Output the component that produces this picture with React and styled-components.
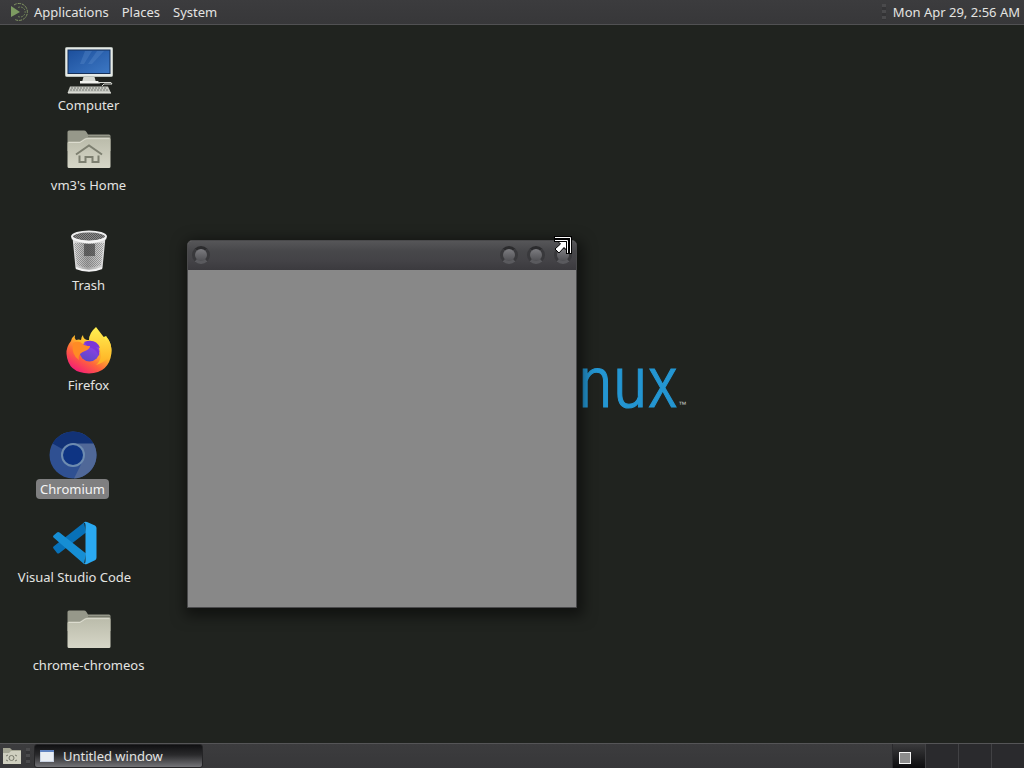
import React from 'react'
import styled, { createGlobalStyle, css } from 'styled-components'

const GlobalStyle = createGlobalStyle`
  * { box-sizing: border-box; }

  body {
    margin: 0;
    background: #20231f;
    font-family: 'Noto Sans', sans-serif;
    font-size: 13px;
    color: #e4e4e2;
  }

  button {
    margin: 0;
    padding: 0;
    border: 0;
    background: none;
    font: inherit;
    color: inherit;
  }
`

const Screen = styled.div`
  display: flex;
  flex-direction: column;
  height: 100vh;
  overflow: hidden;
`

const Panel = styled.header`
  display: flex;
  align-items: stretch;
  flex: none;
  height: 25px;
  background: linear-gradient(#3c3c3e, #373739);
  border-bottom: 1px solid #515153;
`

const BottomPanel = styled(Panel).attrs({ as: 'footer' })`
  border-bottom: 0;
  border-top: 1px solid #555557;
`

const MenuBar = styled.nav`
  display: flex;
  padding-left: 8px;
`

const MenuButton = styled.button`
  display: flex;
  align-items: center;
  gap: 3px;
  padding-right: 13px;
  white-space: nowrap;
`

const Spacer = styled.div`
  flex: 1;
`

const Handle = styled.div`
  flex: none;
  align-self: center;
  width: 4px;
  height: 16px;
  margin: 0 4px;
  background: repeating-linear-gradient(#4a4a4c 0 3px, #343436 3px 6px);
`

const Clock = styled.button`
  padding: 0 4px 0 3px;
  white-space: nowrap;
`

const Desktop = styled.main`
  position: relative;
  flex: 1;
  min-height: 0;
  overflow: hidden;
  background: #20231f;
`

const Launcher = styled.button`
  position: absolute;
  top: ${({ $y }) => $y}px;
  left: ${({ $x }) => $x}px;
  display: flex;
  flex-direction: column;
  align-items: center;
  width: 131px;

  svg { flex: none; display: block; }
`

const Label = styled.span`
  height: 20px;
  padding: 0 4px;
  border-radius: 4px;
  line-height: 20px;
  white-space: nowrap;
  ${({ $selected }) => $selected && css`
    background: #7f7f80;
    color: #f4f4f4;
  `}
`

const Wordmark = styled.div`
  position: absolute;
  top: 318px;
  left: 578px;
  display: flex;
  align-items: baseline;
  font-family: 'Liberation Sans Narrow', 'Roboto Condensed', 'Open Sans', sans-serif;
  font-size: 72px;
  font-weight: 300;
  line-height: 80px;
  color: #2496d2;
  -webkit-text-stroke: 1px #2496d2;

  small {
    font-family: 'Liberation Sans', sans-serif;
    font-size: 8px;
    color: #c8c8c8;
    -webkit-text-stroke: 0;
  }
`

const Window = styled.section`
  position: absolute;
  top: 215px;
  left: 187px;
  display: flex;
  flex-direction: column;
  width: 390px;
  height: 368px;
  border: 1px solid #4a4a4c;
  border-radius: 5px 5px 0 0;
  background: #888888;
  box-shadow: 2px 4px 14px 4px rgba(0, 0, 0, 0.5);
`

const TitleBar = styled.div`
  display: flex;
  align-items: center;
  flex: none;
  gap: 9px;
  height: 29px;
  padding: 0 4px 2px;
  border-radius: 4px 4px 0 0;
  background: linear-gradient(#565658 0, #47474a 35%, #434246 70%, #3b3a3e);
`

const WindowButton = styled.button`
  width: 18px;
  height: 18px;
  border: 3px solid;
  border-color: #2b2b2d #39393c #5a5a5e;
  border-radius: 50%;
  background: linear-gradient(#7c7c80, #505054);
`

const Pointer = styled.svg`
  position: absolute;
  top: 211px;
  left: 554px;
`

const PanelButton = styled.button`
  display: flex;
  align-items: center;
  padding-left: 2px;
`

const Task = styled.button`
  display: flex;
  align-items: center;
  gap: 9px;
  width: 169px;
  padding-left: 5px;
  border: 1px solid #242426;
  border-radius: 3px;
  background: linear-gradient(#101012, #2a2a2c 45%, #737377);
  white-space: nowrap;
`

const Workspaces = styled.div`
  display: flex;
`

const Workspace = styled.button`
  display: flex;
  align-items: center;
  justify-content: center;
  width: 33px;
  padding: 4px 8px 0 0;
  border-left: 1px solid ${({ $active }) => ($active ? '#2a2a2d' : '#414144')};
  background: ${({ $active }) => ($active ? 'linear-gradient(#3a3a3c, #0c0c0e)' : '#2a2a2d')};
`

const MiniWindow = styled.span`
  width: 12px;
  height: 12px;
  border: 1px solid #f4f4f4;
  background: #8c8c8c;
`

const ComputerIcon = () => (
  <svg width="48" height="48" viewBox="0 0 48 48">
    <defs>
      <linearGradient id="screen" x1="0" y1="0" x2="1" y2="1">
        <stop offset="0" stopColor="#1c4f9c" />
        <stop offset="1" stopColor="#3d78c4" />
      </linearGradient>
    </defs>
    <rect x="0.5" y="0.5" width="47" height="29" rx="1" fill="#e6eae6" stroke="#b9c0bb" />
    <rect x="3" y="3" width="42" height="23.5" fill="url(#screen)" stroke="#163058" />
    <path d="M20 4h7l-8 13h-4zM32 4h7L27 17h-4z" fill="#5b8ccc" opacity=".35" />
    <path d="M18.5 30h11l1.5 5H17z" fill="#d5d8d2" />
    <path d="M15 34h18l2 2.5H15z" fill="#f1f2ee" />
    <path d="M33 35.5h13l1 1.500H39l-2 2" fill="none" stroke="#d9dbd5" />
    <path d="M5 39.500h38l3 6.500H2.500z" fill="#c7c9c2" />
    <path d="M6 41h36M5 43h38" stroke="#777b75" strokeDasharray="2 1" />
    <path d="M3 46h43" stroke="#eff0ea" />
  </svg>
)

const FolderIcon = ({ home }) => (
  <svg width="48" height="48" viewBox="0 0 48 48">
    <defs>
      <linearGradient id="folder" x1="0" y1="0" x2="0" y2="1">
        <stop offset="0" stopColor="#babbaa" />
        <stop offset="1" stopColor="#d6d6c7" />
      </linearGradient>
    </defs>
    <path d="M2.500 5q0-1.500 1.500-1.500h15q1.500 0 2.300 1.300L23 7.500h21q1.500 0 1.500 1.500V24h-43z" fill="#96988a" />
    <path d="M23 9.500h22" stroke="#77796c" />
    <path d="M2.500 16q0-1.500 1.500-1.500h11l4.500-3q1-.8 2.500-.8h22q1.500 0 1.500 1.500v27.300q0 1.500-1.500 1.500H4q-1.500 0-1.500-1.500z" fill="url(#folder)" />
    <path d="M3.500 15.500H15l5-3.200q1-.6 2-.6h22.500" fill="none" stroke="#dcdccf" />
    {home && (
      <path
        d="M11 27.500L24 18.500l13 9M14.500 28.500v6.500h6v-5h7v5h6v-6.500"
        fill="none"
        stroke="#7d7f70"
        strokeWidth="2"
      />
    )}
  </svg>
)

const TrashIcon = () => (
  <svg width="48" height="48" viewBox="0 0 48 48">
    <defs>
      <linearGradient id="can" x1="0" y1="0" x2="1" y2="0">
        <stop offset="0" stopColor="#e2e2e2" />
        <stop offset=".45" stopColor="#a4a4a4" />
        <stop offset="1" stopColor="#e4e4e4" />
      </linearGradient>
      <pattern id="mesh" width="2" height="2" patternUnits="userSpaceOnUse">
        <path d="M0 0h1v1H0zM1 1h1v1H1z" fill="#555" />
      </pattern>
    </defs>
    <path d="M7.500 10l3 31q13.500 6.500 27 0l3-31z" fill="url(#can)" />
    <path d="M9 16l3 22q12 5 24 0l3-22z" fill="url(#mesh)" opacity=".45" />
    <path d="M19 17h11v12H19z" fill="#363636" opacity=".6" />
    <path d="M11 41q13 5.500 26 0" fill="none" stroke="#f2f2f2" strokeWidth="2" />
    <ellipse cx="24" cy="9.500" rx="17" ry="5" fill="#5c5c5c" stroke="#eee" strokeWidth="2" />
    <ellipse cx="24" cy="9.500" rx="15" ry="3.500" fill="#8a8a8a" />
    <ellipse cx="24" cy="9.500" rx="15" ry="3.500" fill="url(#mesh)" />
    <path d="M7 11q17 8.500 34 0" fill="none" stroke="#f4f4f4" strokeWidth="2.500" />
  </svg>
)

const FirefoxIcon = () => (
  <svg width="48" height="48" viewBox="0 0 48 48">
    <defs>
      <linearGradient id="fire" x1=".8" y1=".1" x2=".2" y2=".9">
        <stop offset="0" stopColor="#fff044" />
        <stop offset=".35" stopColor="#ffb52b" />
        <stop offset=".65" stopColor="#ff653b" />
        <stop offset="1" stopColor="#f52272" />
      </linearGradient>
      <linearGradient id="globe" x1=".7" y1="0" x2=".3" y2="1">
        <stop offset="0" stopColor="#9a3df0" />
        <stop offset="1" stopColor="#5949c4" />
      </linearGradient>
      <linearGradient id="tail" x1="0" y1="0" x2="0" y2="1">
        <stop offset="0" stopColor="#fff152" />
        <stop offset="1" stopColor="#ffae22" />
      </linearGradient>
    </defs>
    <path d="M10 8q-1 3 1 5 3-1 5 0 0-3 2-5 0 4 4 5h10l9-4q6 7 5.500 17Q44 46 24 46.500 3 46 1.500 27 1 20 6 14q1-4 4-6z" fill="url(#fire)" />
    <path d="M31 0q-7 6-7 13 12 2 12 14 0 7-5 11 15-5 15.500-15-.5-8-4.500-12l-1-2 1 5Q37 8 31 0z" fill="url(#tail)" />
    <circle cx="24.500" cy="24.500" r="10" fill="url(#globe)" />
    <path d="M19 15q12-4 16 6l-4-1q4 4 3 9-3-8-11-9z" fill="#7a35d8" />
    <path d="M8 16q6-3 10 1 2 2 7 2 0 3-5 5-3 1-5 3-2 2-1 6-8-5-6-17z" fill="#ff8b25" />
  </svg>
)

const ChromiumIcon = () => (
  <svg width="48" height="48" viewBox="0 0 48 48">
    <circle cx="24" cy="24" r="23.500" fill="#2f5092" />
    <path d="M24 24L3.500 12.500A23.500 23.500 0 0 1 44.500 12.500z" fill="#123276" />
    <path d="M24 12.500h20.500A23.500 23.500 0 0 1 25 47.500l9-18z" fill="#506898" />
    <circle cx="24" cy="24" r="12" fill="#6e8cb0" />
    <circle cx="24" cy="24" r="10" fill="#0e3483" />
  </svg>
)

const CodeIcon = () => (
  <svg width="48" height="48" viewBox="0 0 48 48">
    <path d="M2.500 29.500q-1-1 0-2L33 3.500l2 10L8.500 34q-1.500 1-2.500 0z" fill="#0871b8" />
    <path d="M2.500 18.500q-1-1 0-2L6 13.500q1-1 2.500 0L35 34.500l-2 10.500z" fill="#168ed4" />
    <path d="M32.500 3.500q1.500-1.300 3.500-.5l8 3.500q1.500 1 1.500 2.500v29.500q0 2-1.500 2.700L36 45q-2 .8-3.500-.5 2 .5 2-2.500V6q0-3-2-2.500z" fill="#2aa9f2" />
  </svg>
)

const MenuLogo = () => (
  <svg width="23" height="20" viewBox="0 0 23 20">
    <path d="M3 4l9 6-9 5z" fill="#7d9b61" />
    <path d="M6 3A8.500 8.500 0 1 1 7 17.500" fill="none" stroke="#829662" strokeDasharray="3 1" />
    <path d="M10 5.500A5 5 0 1 1 10 14.500" fill="none" stroke="#6f8458" strokeDasharray="2 1" />
  </svg>
)

const ShowDesktopIcon = () => (
  <svg width="20" height="20" viewBox="0 0 20 20">
    <path d="M1 2h7l2 2h9v14H1z" fill="#a5a694" />
    <path d="M1 7h6l2-2h10v13H1z" fill="#cfcfbf" />
    <path d="M4 10l2-1M4 14l2 1M15 10l-2-1M15 14l-2 1" stroke="#77796b" />
    <circle cx="9.500" cy="12" r="2.500" fill="none" stroke="#77796b" />
  </svg>
)

const TaskIcon = () => (
  <svg width="14" height="12" viewBox="0 0 14 12">
    <rect x="0.500" y="0.500" width="13" height="11" fill="#e9edf3" stroke="#c8d2e2" />
    <path d="M0 1h14" stroke="#5f82c0" strokeWidth="2" />
  </svg>
)

const launchers = [
  { label: 'Computer', x: 23, y: 22, icon: <ComputerIcon /> },
  { label: 'vm3\'s Home', x: 23, y: 102, icon: <FolderIcon home /> },
  { label: 'Trash', x: 23, y: 202, icon: <TrashIcon /> },
  { label: 'Firefox', x: 23, y: 302, icon: <FirefoxIcon /> },
  { label: 'Chromium', x: 7, y: 406, icon: <ChromiumIcon />, selected: true },
  { label: 'Visual Studio Code', x: 9, y: 494, icon: <CodeIcon /> },
  { label: 'chrome-chromeos', x: 23, y: 582, icon: <FolderIcon /> },
]

const workspaces = [1, 2, 3, 4]

export default function App() {
  return (
    <Screen>
      <GlobalStyle />
      <Panel>
        <MenuBar>
          <MenuButton><MenuLogo />Applications</MenuButton>
          <MenuButton>Places</MenuButton>
          <MenuButton>System</MenuButton>
        </MenuBar>
        <Spacer />
        <Handle />
        <Clock>Mon Apr 29, 2:56 AM</Clock>
      </Panel>
      <Desktop>
        <Wordmark>nux<small>™</small></Wordmark>
        {launchers.map(({ label, x, y, icon, selected }) => (
          <Launcher key={label} $x={x} $y={y}>
            {icon}
            <Label $selected={selected}>{label}</Label>
          </Launcher>
        ))}
        <Window aria-label="Untitled window">
          <TitleBar>
            <WindowButton aria-label="Window menu" />
            <Spacer />
            <WindowButton aria-label="Minimize" />
            <WindowButton aria-label="Maximize" />
            <WindowButton aria-label="Close" />
          </TitleBar>
        </Window>
        <Pointer width="19" height="19" viewBox="0 0 19 19">
          <path d="M0 0h18v18h-6V6H0z" fill="#000" />
          <path d="M1 1.500h15.500V17" fill="none" stroke="#fff" />
          <path d="M1 4.500h12.500V17" fill="none" stroke="#fff" />
          <path d="M4 5.500h8.500v8.500l-2.500-2.500-5 5.500-4-4 5.500-5z" fill="#fff" stroke="#000" />
        </Pointer>
      </Desktop>
      <BottomPanel>
        <PanelButton aria-label="Show desktop"><ShowDesktopIcon /></PanelButton>
        <Handle />
        <Task><TaskIcon />Untitled window</Task>
        <Spacer />
        <Workspaces>
          {workspaces.map(n => (
            <Workspace key={n} $active={n === 1} aria-label={`Workspace ${n}`}>
              {n === 1 && <MiniWindow />}
            </Workspace>
          ))}
        </Workspaces>
      </BottomPanel>
    </Screen>
  )
}
